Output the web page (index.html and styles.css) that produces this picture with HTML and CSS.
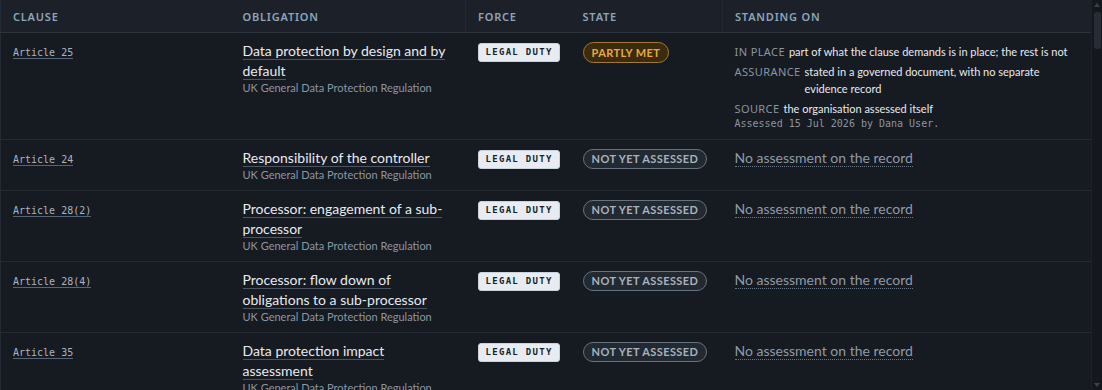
FILE: index.html
```html
<!DOCTYPE html>
<html lang="en">
<head>
<meta charset="utf-8">
<title>Obligations</title>
<link rel="stylesheet" href="styles.css">
</head>
<body>
<div class="page">
<div class="scroller">
<table class="register">
  <colgroup>
    <col class="c-clause"><col class="c-obl"><col class="c-force"><col class="c-state"><col class="c-stand">
  </colgroup>
  <thead>
    <tr>
      <th>Clause</th>
      <th class="div">Obligation</th>
      <th>Force</th>
      <th class="div">State</th>
      <th>Standing on</th>
    </tr>
  </thead>
  <tbody>
    <tr>
      <td><a class="clause" href="#">Article 25</a></td>
      <td><a class="title" href="#">Data protection by design and by default</a><div class="src">UK General Data Protection Regulation</div></td>
      <td><span class="force">Legal duty</span></td>
      <td><span class="pill partly">Partly met</span></td>
      <td>
        <div class="standing">
          <div class="srow"><span class="lbl">In place</span><span class="val">part of what the clause demands is in place; the rest is not</span></div>
          <div class="srow"><span class="lbl">Assurance</span><span class="val">stated in a governed document, with no separate evidence record</span></div>
          <div class="srow last"><span class="lbl">Source</span><span class="val">the organisation assessed itself</span></div>
          <div class="assessed">Assessed 15 Jul 2026 by Dana User.</div>
        </div>
      </td>
    </tr>
    <tr>
      <td><a class="clause" href="#">Article 24</a></td>
      <td><a class="title" href="#">Responsibility of the controller</a><div class="src">UK General Data Protection Regulation</div></td>
      <td><span class="force">Legal duty</span></td>
      <td><span class="pill none">Not yet assessed</span></td>
      <td><span class="noassess">No assessment on the record</span></td>
    </tr>
    <tr>
      <td><a class="clause" href="#">Article 28(2)</a></td>
      <td><a class="title" href="#">Processor: engagement of a sub-processor</a><div class="src">UK General Data Protection Regulation</div></td>
      <td><span class="force">Legal duty</span></td>
      <td><span class="pill none">Not yet assessed</span></td>
      <td><span class="noassess">No assessment on the record</span></td>
    </tr>
    <tr>
      <td><a class="clause" href="#">Article 28(4)</a></td>
      <td><a class="title" href="#">Processor: flow down of obligations to a sub-processor</a><div class="src">UK General Data Protection Regulation</div></td>
      <td><span class="force">Legal duty</span></td>
      <td><span class="pill none">Not yet assessed</span></td>
      <td><span class="noassess">No assessment on the record</span></td>
    </tr>
    <tr>
      <td><a class="clause" href="#">Article 35</a></td>
      <td><a class="title" href="#">Data protection impact assessment</a><div class="src">UK General Data Protection Regulation</div></td>
      <td><span class="force">Legal duty</span></td>
      <td><span class="pill none">Not yet assessed</span></td>
      <td><span class="noassess">No assessment on the record</span></td>
    </tr>
    <tr>
      <td><a class="clause" href="#">Article 30</a></td>
      <td><a class="title" href="#">Records of processing activities</a><div class="src">UK General Data Protection Regulation</div></td>
      <td><span class="force">Legal duty</span></td>
      <td><span class="pill none">Not yet assessed</span></td>
      <td><span class="noassess">No assessment on the record</span></td>
    </tr>
    <tr>
      <td><a class="clause" href="#">Article 32</a></td>
      <td><a class="title" href="#">Security of processing</a><div class="src">UK General Data Protection Regulation</div></td>
      <td><span class="force">Legal duty</span></td>
      <td><span class="pill none">Not yet assessed</span></td>
      <td><span class="noassess">No assessment on the record</span></td>
    </tr>
  </tbody>
</table>
</div>
<div class="rail" aria-hidden="true">
  <span class="arrow up"></span>
  <span class="thumb"></span>
  <span class="rail-fill"></span>
  <span class="arrow down"></span>
</div>
</div>
</body>
</html>
```

FILE: styles.css
```css
html, body {
  height: 100%;
}
html {
  color-scheme: dark;
  background: #161a21;
}
body {
  margin: 0;
  background: #161a21;
  font-family: Lato, "Noto Sans", sans-serif;
  color: #e6ebf0;
  overflow: hidden;
}
.page {
  display: flex;
  height: 100vh;
}
.scroller {
  flex: 1;
  min-width: 0;
  overflow: hidden;
}
.rail {
  flex: none;
  width: 11px;
  background: #14181e;
  border-left: 1px solid #1d2229;
  display: flex;
  flex-direction: column;
  align-items: center;
  padding: 3px 0;
  box-sizing: border-box;
}
.arrow {
  width: 0;
  height: 0;
  border-left: 3px solid transparent;
  border-right: 3px solid transparent;
}
.arrow.up { border-bottom: 4px solid #3a4149; }
.arrow.down { border-top: 4px solid #3a4149; }
.thumb {
  width: 7px;
  height: 37px;
  margin-top: 5px;
  border-radius: 3px;
  background: #272d35;
}
.rail-fill { flex: 1; }

.register {
  width: 100%;
  border-collapse: collapse;
  table-layout: fixed;
  border-left: 1px solid #242a33;
}
.c-clause { width: 230px; }
.c-obl { width: 235px; }
.c-force { width: 105px; }
.c-state { width: 152px; }
.c-stand { width: auto; }

thead th {
  background: #1c2129;
  height: 32px;
  padding: 0 12px;
  text-align: left;
  font-size: 11px;
  font-weight: 600;
  letter-spacing: 0.8px;
  text-transform: uppercase;
  color: #8ea4ba;
  border-bottom: 1px solid #2c333d;
  font-family: "Noto Sans", sans-serif;
}
thead th.div { border-right: 1px solid #232932; }

tbody td {
  vertical-align: top;
  padding: 8px 12px 8px 12px;
  font-size: 14px;
  line-height: 20px;
  border-bottom: 1px solid #242a32;
}

.clause {
  font-family: "DejaVu Sans Mono", monospace;
  font-size: 10px;
  color: #a9b5c2;
  text-decoration: none;
  border-bottom: 1px solid #55667a;
}

.title {
  font-size: 14px;
  color: #e6ebf0;
  text-decoration: none;
  border-bottom: 1px solid #4a5563;
}
.src {
  font-size: 11px;
  line-height: 14px;
  color: #8b96a2;
}

.force {
  display: inline-block;
  vertical-align: top;
  white-space: nowrap;
  margin-top: 2px;
  font-family: "DejaVu Sans Mono", monospace;
  font-weight: bold;
  font-size: 9px;
  letter-spacing: 1.3px;
  text-transform: uppercase;
  line-height: 17px;
  padding: 0 6px 0 7px;
  background: #e6ecf2;
  color: #1a1f27;
  border: 1px solid #c9d1da;
  border-radius: 3px;
}

.pill {
  display: inline-block;
  vertical-align: top;
  white-space: nowrap;
  font-size: 11px;
  font-weight: 700;
  letter-spacing: 0.4px;
  text-transform: uppercase;
  border-radius: 999px;
  padding: 0 8px;
}
.partly {
  margin-top: 1px;
  line-height: 19px;
  color: #e9a93a;
  background: #3b2b11;
  border: 1px solid #a7792b;
}
.none {
  margin-top: 1px;
  line-height: 18px;
  color: #a7b2be;
  background: #222931;
  border: 1px solid #68727e;
}

.noassess {
  font-size: 14px;
  color: #8f9aa7;
  border-bottom: 1px dotted #6a7683;
}

.standing {
  padding-top: 2px;
  font-size: 11px;
  line-height: 17px;
}
.srow {
  display: flex;
  gap: 4px;
  margin-bottom: 3px;
}
.srow.last { margin-bottom: 0; }
.lbl {
  flex: none;
  color: #8b95a1;
  text-transform: uppercase;
  letter-spacing: 0.4px;
  font-family: "Noto Sans", sans-serif;
}
.val {
  color: #e6ebf0;
}
.assessed {
  font-family: "DejaVu Sans Mono", monospace;
  font-size: 10px;
  line-height: 14px;
  color: #8b95a1;
}
```
